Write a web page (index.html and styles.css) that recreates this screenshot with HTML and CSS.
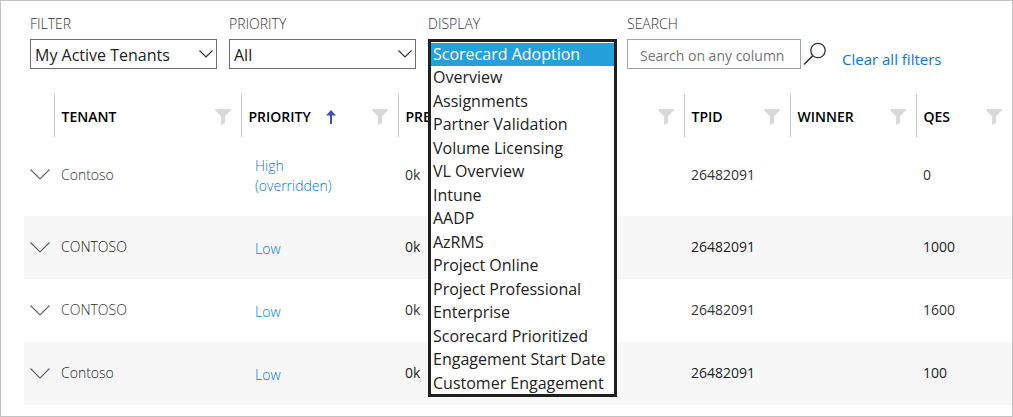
FILE: index.html
```html
<!DOCTYPE html>
<html lang="en">
<head>
<meta charset="utf-8">
<title>Tenants</title>
<link rel="stylesheet" href="styles.css">
</head>
<body>
<svg class="sprite" aria-hidden="true">
  <symbol id="funnel" viewBox="0 0 16 16"><path d="M0 0H16V1L10 7.500V14L6 16V7.500L0 1Z" fill="currentColor"/></symbol>
  <symbol id="expand" viewBox="0 0 20 11"><path d="M.5.5 10 10 19.500.5" fill="none" stroke="currentColor" stroke-width="1.200"/></symbol>
  <symbol id="caret" viewBox="0 0 14 8"><path d="M.5.5 7 7 13.500.5" fill="none" stroke="currentColor" stroke-width="1.200"/></symbol>
</svg>
<main class="frame">
  <form class="toolbar">
    <div class="field">
      <label class="label" for="filter">FILTER</label>
      <div class="select-box">
        <select class="select" id="filter"><option>My Active Tenants</option></select>
        <svg class="caret"><use href="#caret"/></svg>
      </div>
    </div>
    <div class="field">
      <label class="label" for="priority">PRIORITY</label>
      <div class="select-box">
        <select class="select" id="priority"><option>All</option></select>
        <svg class="caret"><use href="#caret"/></svg>
      </div>
    </div>
    <div class="field field-display">
      <label class="label" for="display">DISPLAY</label>
      <div class="list-anchor">
        <select class="list" id="display" size="15">
          <option selected>Scorecard Adoption</option>
          <option>Overview</option>
          <option>Assignments</option>
          <option>Partner Validation</option>
          <option>Volume Licensing</option>
          <option>VL Overview</option>
          <option>Intune</option>
          <option>AADP</option>
          <option>AzRMS</option>
          <option>Project Online</option>
          <option>Project Professional</option>
          <option>Enterprise</option>
          <option>Scorecard Prioritized</option>
          <option>Engagement Start Date</option>
          <option>Customer Engagement</option>
        </select>
      </div>
    </div>
    <div class="field field-search">
      <label class="label" for="search">SEARCH</label>
      <div class="search-row">
        <input class="search" id="search" type="text" placeholder="Search on any column">
        <button class="icon-button" type="button" aria-label="Search"><svg class="magnifier" viewBox="0 0 24 24"><circle cx="15" cy="8.500" r="7.200" fill="none" stroke="currentColor" stroke-width="1.300"/><path d="M9.800 13.600 1 22.500" stroke="currentColor" stroke-width="1.500"/></svg></button>
        <a class="clear" href="#">Clear all filters</a>
      </div>
    </div>
  </form>

  <table class="grid">
    <colgroup>
      <col class="col-expand"><col class="col-tenant"><col class="col-priority"><col class="col-pre"><col class="col-tpid"><col class="col-winner"><col class="col-qes">
    </colgroup>
    <thead>
      <tr>
        <td></td>
        <th scope="col"><div class="head"><span>TENANT</span><button class="icon-button" type="button" aria-label="Filter tenant"><svg class="funnel"><use href="#funnel"/></svg></button></div></th>
        <th scope="col" aria-sort="ascending"><div class="head"><span class="sorted">PRIORITY<svg class="arrow" viewBox="0 0 10 14"><path d="M5 0 10 5.500H6V14H4V5.500H0Z" fill="currentColor"/></svg></span><button class="icon-button" type="button" aria-label="Filter priority"><svg class="funnel"><use href="#funnel"/></svg></button></div></th>
        <th scope="col"><div class="head"><span>PRE</span><button class="icon-button" type="button" aria-label="Filter column"><svg class="funnel"><use href="#funnel"/></svg></button></div></th>
        <th scope="col"><div class="head"><span>TPID</span><button class="icon-button" type="button" aria-label="Filter TPID"><svg class="funnel"><use href="#funnel"/></svg></button></div></th>
        <th scope="col"><div class="head"><span>WINNER</span><button class="icon-button" type="button" aria-label="Filter winner"><svg class="funnel"><use href="#funnel"/></svg></button></div></th>
        <th scope="col"><div class="head"><span>QES</span><button class="icon-button" type="button" aria-label="Filter QES"><svg class="funnel"><use href="#funnel"/></svg></button></div></th>
      </tr>
    </thead>
    <tbody>
      <tr class="row-tall">
        <td class="expand-cell"><button class="icon-button" type="button" aria-label="Expand"><svg class="expand"><use href="#expand"/></svg></button></td>
        <td class="tenant">Contoso</td>
        <td class="priority"><a href="#">High<br>(overridden)</a></td>
        <td>0k</td><td>26482091</td><td></td><td>0</td>
      </tr>
      <tr>
        <td class="expand-cell"><button class="icon-button" type="button" aria-label="Expand"><svg class="expand"><use href="#expand"/></svg></button></td>
        <td class="tenant">CONTOSO</td>
        <td class="priority"><a href="#">Low</a></td>
        <td>0k</td><td>26482091</td><td></td><td>1000</td>
      </tr>
      <tr>
        <td class="expand-cell"><button class="icon-button" type="button" aria-label="Expand"><svg class="expand"><use href="#expand"/></svg></button></td>
        <td class="tenant">CONTOSO</td>
        <td class="priority"><a href="#">Low</a></td>
        <td>0k</td><td>26482091</td><td></td><td>1600</td>
      </tr>
      <tr>
        <td class="expand-cell"><button class="icon-button" type="button" aria-label="Expand"><svg class="expand"><use href="#expand"/></svg></button></td>
        <td class="tenant">Contoso</td>
        <td class="priority"><a href="#">Low</a></td>
        <td>0k</td><td>26482091</td><td></td><td>100</td>
      </tr>
    </tbody>
  </table>
</main>
</body>
</html>
```

FILE: styles.css
```css
* { box-sizing: border-box; }

body {
  margin: 0;
  background: #fff;
  color: #333;
  font-family: "Open Sans", "Noto Sans", sans-serif;
  font-size: 14px;
  line-height: 20px;
}

a { color: #0a78d0; text-decoration: none; }
svg { display: block; }
.sprite { position: absolute; width: 0; height: 0; }

.frame {
  min-height: 100vh;
  padding: 12px 0 10px 23px;
  border: 1px solid #c3c3c3;
}

.toolbar {
  display: flex;
  gap: 12px;
  padding: 0 6px;
}

.field { width: 187px; }
.field-display { width: 188px; }
.field-search { flex: 1; margin-left: -1px; }

.label {
  display: block;
  height: 26px;
  font-size: 14px;
  font-weight: 300;
  line-height: 22px;
}

.select-box, .list-anchor { position: relative; height: 30px; }

.select {
  appearance: none;
  width: 100%;
  height: 30px;
  padding: 2px 24px 0 4px;
  border: 1px solid #6e6e6e;
  border-radius: 0;
  background: #fff;
  color: #222;
  font: 16px/24px "Open Sans", "Noto Sans", sans-serif;
}

.caret {
  position: absolute;
  top: 11px;
  right: 4px;
  width: 14px;
  height: 8px;
  color: #333;
  pointer-events: none;
}

.list {
  position: absolute;
  top: 0;
  left: 0;
  z-index: 1;
  width: 189px;
  height: 358px;
  padding: 1px 0 0;
  overflow: hidden;
  border: 3px solid #1f1f1f;
  border-radius: 0;
  outline: 0;
  background: #fff;
  color: #222;
  font: 16px/23px "Open Sans", "Noto Sans", sans-serif;
}

.list option {
  height: 23px;
  min-height: 23px;
  padding: 0 2px;
  line-height: 23px;
}

.list option:nth-child(even) { height: 24px; line-height: 24px; }

.list option:checked {
  background: #26a0da linear-gradient(#26a0da, #26a0da);
  color: #fff;
  -webkit-text-fill-color: #fff;
}

.search-row { display: flex; }

.search {
  width: 174px;
  height: 30px;
  padding: 2px 11px 0 12px;
  border: 1px solid #9aa8a8;
  border-radius: 0;
  font: 14px/24px "Open Sans", "Noto Sans", sans-serif;
}

.search::placeholder { color: #757575; }

.icon-button {
  padding: 0;
  border: 0;
  background: none;
  color: inherit;
}

.magnifier { width: 24px; height: 24px; margin-left: 2px; color: #333; }
.clear { margin: 10px 0 0 15px; font-size: 15px; }

.grid {
  width: 100%;
  margin-top: 25px;
  table-layout: fixed;
  border-collapse: collapse;
}

.col-expand { width: 30px; }
.col-tenant { width: 187px; }
.col-priority { width: 157px; }
.col-pre { width: 286px; }
.col-tpid { width: 106px; }
.col-winner { width: 126px; }
.col-qes { width: 96px; }

th {
  height: 43px;
  padding: 2px 10px 0 7px;
  border-left: 1px solid #c6c6c6;
  color: #000;
  font-size: 14px;
  font-weight: 600;
  text-align: left;
}

.head, .sorted { display: flex; align-items: center; }
.head { justify-content: space-between; }
.sorted { gap: 15px; }
.arrow { width: 10px; height: 14px; color: #3f51b5; }
.funnel { width: 16px; height: 16px; color: #d9d9d9; }

tbody td { height: 63px; padding: 0 0 2px 7px; }
tbody .row-tall td { height: 79px; padding-bottom: 3px; }
tbody tr:nth-child(even) { background: #f7f7f7; color: #222; }
tbody .expand-cell { padding: 0 0 0 6px; }
.expand { width: 20px; height: 11px; color: #666; }
.tenant { font-weight: 300; }
tbody .priority { padding: 2px 0 0 14px; font-weight: 300; }
tbody .row-tall .priority { padding-bottom: 4px; }
```
